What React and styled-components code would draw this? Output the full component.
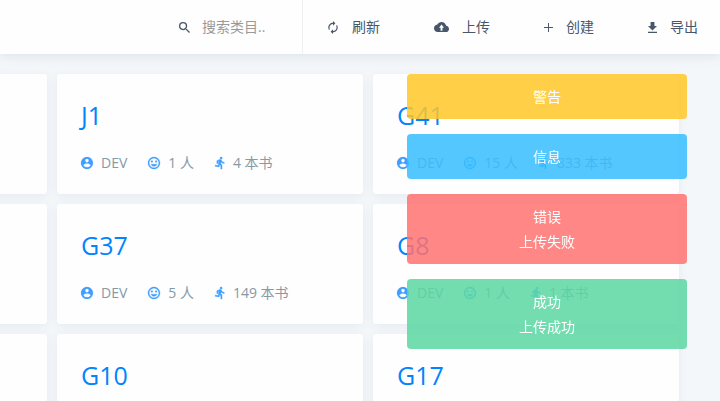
import React from "react";
import styled, { createGlobalStyle } from "styled-components";

const GlobalStyle = createGlobalStyle`
  * { box-sizing: border-box; }
  html, body, #root { height: 100%; }
  body {
    margin: 0;
    overflow: hidden;
    background: #f4f7fa;
    font-family: "Open Sans", "Noto Sans CJK SC", sans-serif;
    font-size: 14px;
    line-height: 20px;
  }
  ul, h2, p { margin: 0; padding: 0; }
`;

const Page = styled.div`
  height: 100%;
  overflow: hidden;
`;

const Header = styled.header`
  display: flex;
  justify-content: flex-end;
  height: 54px;
  background: #fefefe;
  box-shadow: 0 1px 12px rgba(60, 90, 110, 0.14);
  color: #475669;
`;

const Search = styled.label`
  display: flex;
  align-items: center;
  gap: 12px;
  border-right: 1px solid #eef1f4;
`;

const SearchInput = styled.input`
  width: 100px;
  padding: 0;
  border: 0;
  outline: 0;
  background: transparent;
  color: #475669;
  font: inherit;
  &::placeholder { color: #999; opacity: 1; }
`;

const Actions = styled.nav`
  display: flex;
  gap: 54px;
  padding: 0 22px 0 24px;
`;

const Action = styled.button`
  display: flex;
  align-items: center;
  gap: 13px;
  padding: 0;
  border: 0;
  background: none;
  color: inherit;
  font: inherit;
  white-space: nowrap;
  cursor: pointer;
`;

const Svg = styled.svg`
  display: block;
  flex: none;
  fill: currentColor;
  stroke: currentColor;
  stroke-width: ${({ $stroke }) => $stroke};
  overflow: visible;
`;

const Grid = styled.main`
  display: grid;
  grid-template-columns: repeat(3, 1fr);
  gap: 10px;
  margin: 20px 41px 0 -259px;
`;

const Card = styled.article`
  height: 120px;
  padding: 24px;
  border-radius: 3px;
  background: #fefefe;
  box-shadow: 0 2px 10px rgba(60, 90, 110, 0.08);
`;

const CardTitle = styled.h2`
  color: #0084ff;
  font-size: 25px;
  font-weight: 400;
  line-height: 34px;
`;

const Meta = styled.ul`
  display: flex;
  gap: 21px;
  margin-top: 21px;
  list-style: none;
`;

const MetaItem = styled.li`
  display: flex;
  align-items: center;
  gap: 8px;
  color: #8599a6;
  white-space: nowrap;
  svg { color: #409eff; }
`;

const Toasts = styled.aside`
  position: fixed;
  top: 74px;
  right: 33px;
  display: flex;
  flex-direction: column;
  gap: 15px;
  width: 280px;
`;

const tones = {
  warning: "rgba(255, 199, 40, 0.85)",
  info: "rgba(54, 189, 255, 0.85)",
  error: "rgba(255, 114, 112, 0.85)",
  success: "rgba(91, 215, 162, 0.85)",
};

const Toast = styled.div`
  padding: 10px;
  border-radius: 4px;
  background: ${({ $tone }) => tones[$tone]};
  color: #fff;
  line-height: 25px;
  text-align: center;
`;

const icons = {
  search: { w: 11, h: 11, box: "3 3 17.5 17.5", d: "M15.5 14h-.79l-.28-.27A6.471 6.471 0 0 0 16 9.5 6.5 6.5 0 1 0 9.5 16c1.61 0 3.09-.59 4.23-1.57l.27.28v.79l5 4.99L20.49 19l-4.99-5zm-6 0C7.01 14 5 11.99 5 9.5S7.01 5 9.5 5 14 7.01 14 9.5 11.99 14 9.5 14z" },
  refresh: { w: 12, h: 13, box: "2 1 20 22", d: "M12 6v3l4-4-4-4v3c-4.42 0-8 3.58-8 8 0 1.57.46 3.03 1.24 4.26L6.7 14.8A5.87 5.87 0 0 1 6 12c0-3.31 2.69-6 6-6zm6.76 1.74L17.3 9.2c.44.84.7 1.79.7 2.8 0 3.31-2.69 6-6 6v-3l-4 4 4 4v-3c4.42 0 8-3.58 8-8 0-1.57-.46-3.03-1.24-4.26z" },
  upload: { w: 15, h: 10, box: "0 4 24 16", d: "M19.35 10.04C18.67 6.59 15.64 4 12 4 9.11 4 6.6 5.64 5.35 8.04 2.34 8.36 0 10.91 0 14c0 3.31 2.69 6 6 6h13c2.76 0 5-2.24 5-5 0-2.64-2.05-4.78-4.65-4.96zM13.5 13v5h-3v-5H8l4-5 4 5z" },
  plus: { w: 9, h: 9, box: "5 5 14 14", d: "M19 12.75h-6.25V19h-1.5v-6.25H5v-1.5h6.25V5h1.5v6.25H19z" },
  download: { w: 9, h: 11, box: "5 3 14 17", d: "M19 9h-4V3H9v6H5l7 7 7-7zM5 18v2h14v-2z" },
  account: { w: 12, h: 12, box: "2 2 20 20", stroke: 0.3, d: "M12 2C6.48 2 2 6.48 2 12s4.48 10 10 10 10-4.48 10-10S17.52 2 12 2zm0 3c1.66 0 3 1.34 3 3s-1.34 3-3 3-3-1.34-3-3 1.34-3 3-3zm0 14.2a7.2 7.2 0 0 1-6-3.22c.03-1.99 4-3.08 6-3.08 1.99 0 5.97 1.09 6 3.08a7.2 7.2 0 0 1-6 3.22z" },
  mood: { w: 12, h: 12, box: "2 2 20 20", stroke: 0.5, d: "M11.99 2C6.47 2 2 6.48 2 12s4.47 10 9.99 10C17.52 22 22 17.52 22 12S17.52 2 11.99 2zM12 20c-4.42 0-8-3.58-8-8s3.58-8 8-8 8 3.58 8 8-3.58 8-8 8zm3.5-9c.83 0 1.5-.67 1.5-1.5S16.33 8 15.5 8 14 8.67 14 9.5s.67 1.5 1.5 1.5zm-7 0c.83 0 1.5-.67 1.5-1.5S9.33 8 8.5 8 7 8.67 7 9.5 7.67 11 8.5 11zm3.5 6.5c2.33 0 4.31-1.46 5.11-3.5H6.89c.8 2.04 2.78 3.5 5.11 3.5z" },
  run: { w: 10, h: 12, box: "3 1.5 17 21.5", stroke: 0.9, d: "M13.49 5.48c1.1 0 2-.9 2-2s-.9-2-2-2-2 .9-2 2 .9 2 2 2zm-3.6 13.9l1-4.4 2.1 2v6h2v-7.5l-2.1-2 .6-3c1.3 1.5 3.3 2.5 5.5 2.5v-2c-1.9 0-3.5-1-4.3-2.4l-1-1.6c-.4-.6-1-1-1.7-1-.3 0-.5.1-.8.1l-5.2 2.2v4.7h2v-3.4l1.8-.7-1.6 8.1-4.9-1-.4 2 7 1.4z" },
};

function Icon({ name }) {
  const { w, h, box, d, stroke = 0 } = icons[name];
  return (
    <Svg width={w} height={h} viewBox={box} $stroke={stroke} aria-hidden="true">
      <path d={d} />
    </Svg>
  );
}

const actions = [
  { icon: "refresh", label: "刷新" },
  { icon: "upload", label: "上传" },
  { icon: "plus", label: "创建" },
  { icon: "download", label: "导出" },
];

const cards = [
  null,
  { title: "J1", people: 1, books: 4 },
  { title: "G41", people: 15, books: 833 },
  null,
  { title: "G37", people: 5, books: 149 },
  { title: "G8", people: 1, books: 1 },
  null,
  { title: "G10" },
  { title: "G17" },
];

const toasts = [
  { tone: "warning", title: "警告" },
  { tone: "info", title: "信息" },
  { tone: "error", title: "错误", text: "上传失败" },
  { tone: "success", title: "成功", text: "上传成功" },
];

export default function App() {
  return (
    <Page>
      <GlobalStyle />
      <Header>
        <Search>
          <Icon name="search" />
          <SearchInput type="text" placeholder="搜索类目.." aria-label="搜索类目" />
        </Search>
        <Actions>
          {actions.map(({ icon, label }) => (
            <Action key={label} type="button">
              <Icon name={icon} />
              {label}
            </Action>
          ))}
        </Actions>
      </Header>
      <Grid>
        {cards.map((card, i) => (
          <Card key={i}>
            {card && <CardTitle>{card.title}</CardTitle>}
            {card && card.books && (
              <Meta>
                <MetaItem><Icon name="account" />DEV</MetaItem>
                <MetaItem><Icon name="mood" />{card.people} 人</MetaItem>
                <MetaItem><Icon name="run" />{card.books} 本书</MetaItem>
              </Meta>
            )}
          </Card>
        ))}
      </Grid>
      <Toasts>
        {toasts.map(({ tone, title, text }) => (
          <Toast key={tone} $tone={tone} role="status">
            <p>{title}</p>
            {text && <p>{text}</p>}
          </Toast>
        ))}
      </Toasts>
    </Page>
  );
}
